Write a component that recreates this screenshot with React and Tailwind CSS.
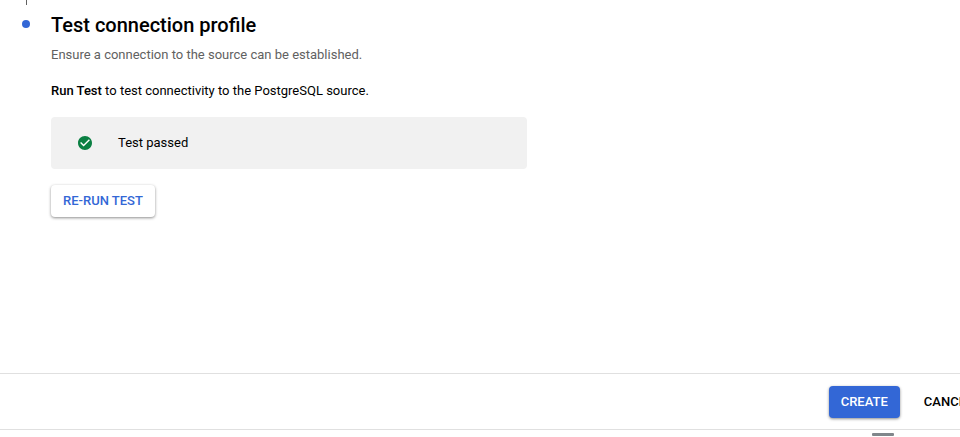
export default function App() {
  return (
    <div className="flex h-screen flex-col overflow-hidden bg-white font-[Roboto,sans-serif] text-[13px] leading-5 text-black">
      <main className="flex flex-1 gap-[21px] pl-[22px]">
        <div className="flex w-2 flex-col items-center">
          <div className="h-[5px] w-px bg-[#616161]" />
          <div className="mt-[15px] size-2 rounded-full bg-[#3367d6]" />
        </div>
        <section className="w-[476px] pt-[13px]">
          <h1 className="text-[20px] font-medium leading-6">Test connection profile</h1>
          <p className="mt-2 text-[#616161]">Ensure a connection to the source can be established.</p>
          <p className="mt-4">
            <strong className="font-medium">Run Test</strong> to test connectivity to the PostgreSQL source.
          </p>
          <div role="status" className="mt-4 flex h-[52px] items-center gap-[26px] rounded-sm bg-[#f1f1f1] px-[27px]">
            <svg className="size-[14px]" viewBox="2 2 20 20" fill="#0b8043" aria-hidden="true">
              <circle cx="12" cy="12" r="8" fill="#fff" />
              <path d="M12 2C6.48 2 2 6.48 2 12s4.48 10 10 10 10-4.48 10-10S17.52 2 12 2zm-2 15l-5-5 1.41-1.41L10 14.17l7.59-7.59L19 8l-9 9z" />
            </svg>
            <span>Test passed</span>
          </div>
          <button type="button" className="mt-4 h-8 rounded-sm bg-white px-3 font-medium text-[#3367d6] shadow-[0_1px_3px_rgba(0,0,0,0.45)]">
            RE-RUN TEST
          </button>
        </section>
      </main>
      <footer className="h-16 shrink-0">
        <div className="flex h-[57px] items-center justify-end gap-3 border-y border-[#e0e0e0]">
          <button type="button" className="h-8 rounded-sm bg-[#3367d6] px-3 font-medium text-white shadow-[0_1px_3px_rgba(0,0,0,0.45)]">
            CREATE
          </button>
          <button type="button" className="-mr-[25px] h-8 px-3 font-medium">CANCEL</button>
        </div>
        <div className="mr-[66px] mt-[3px] ml-auto h-[3px] w-[22px] rounded-[1px] bg-[#80868b]" />
      </footer>
    </div>
  );
}
